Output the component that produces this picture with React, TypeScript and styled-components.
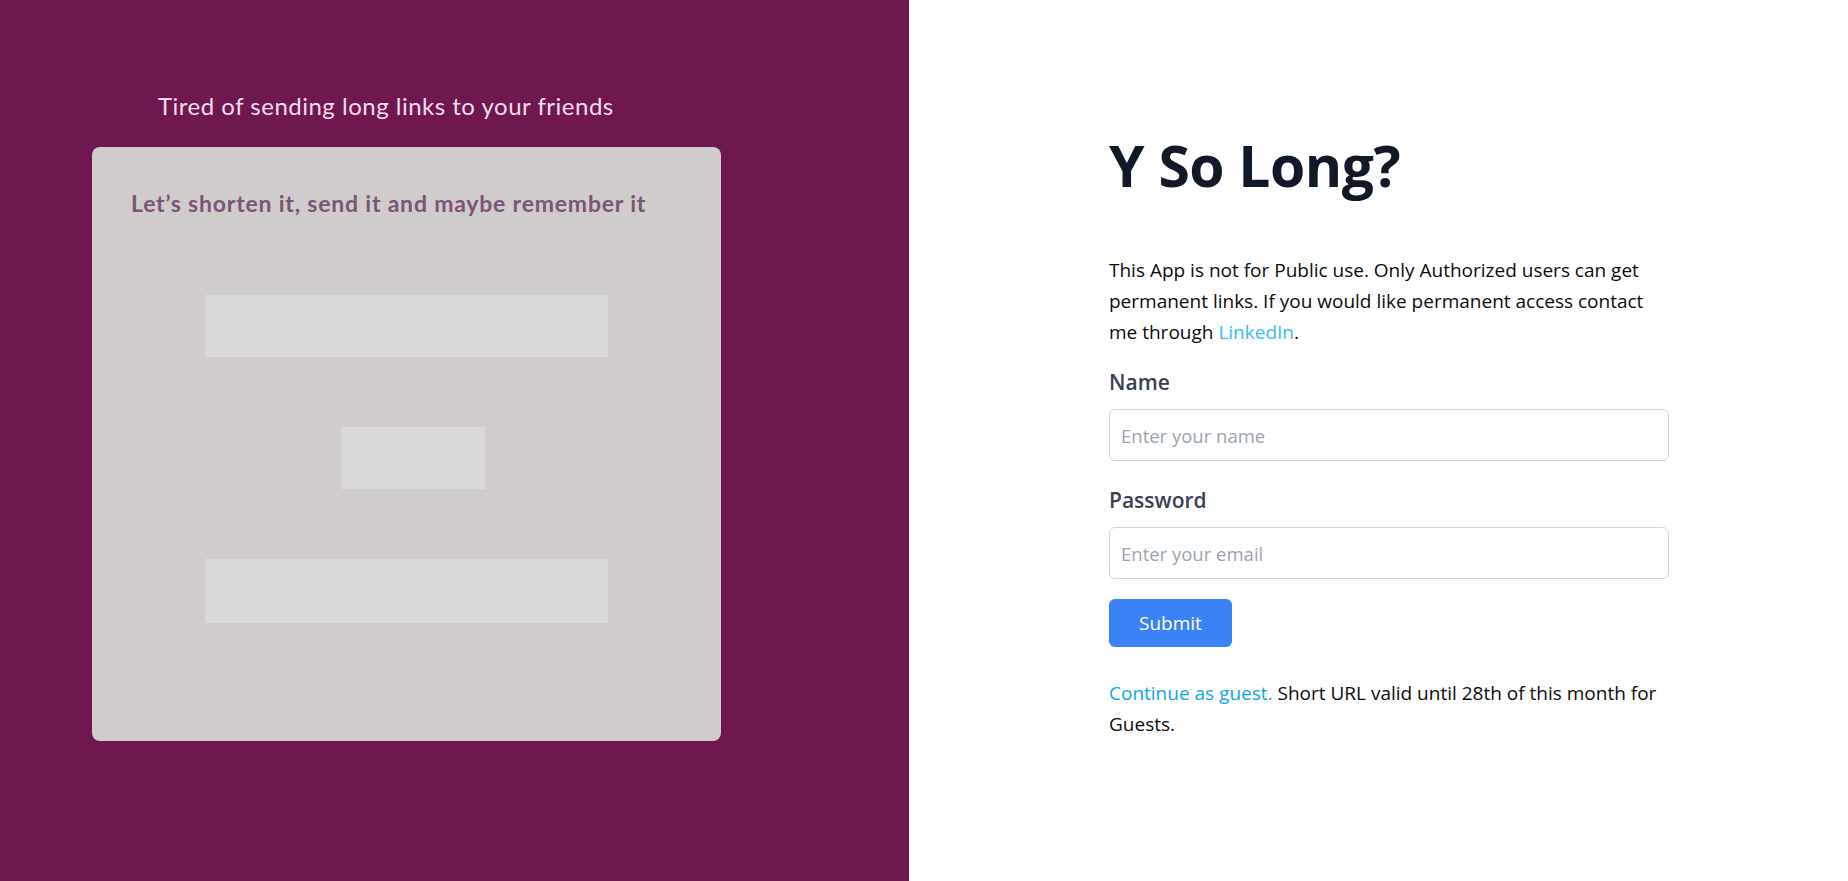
import React from "react";
import styled, { createGlobalStyle } from "styled-components";

const GlobalStyle = createGlobalStyle`
  * { box-sizing: border-box; }
  html, body { margin: 0; padding: 0; }
  body {
    font-family: "Open Sans", "Noto Sans", sans-serif;
    background: #ffffff;
  }
`;

const Page = styled.div`
  display: flex;
  width: 100%;
  height: 881px;
  overflow: hidden;
`;

const LeftPanel = styled.section`
  width: 909px;
  flex-shrink: 0;
  background: #6f1850;
  display: flex;
  flex-direction: column;
  padding: 91px 0 0 92px;
  font-family: "Lato", "Noto Sans", sans-serif;
`;

const Tagline = styled.h2`
  margin: 0 0 26px 66px;
  font-size: 24px;
  line-height: 30px;
  font-weight: 400;
  letter-spacing: 0.5px;
  color: #f3dcec;
`;

const Card = styled.div`
  width: 629px;
  height: 594px;
  background: #d0cccb;
  border-radius: 8px;
  display: flex;
  flex-direction: column;
  padding-top: 41px;
`;

const CardText = styled.p`
  margin: 0 0 77px 39px;
  font-size: 23px;
  line-height: 30px;
  font-weight: 700;
  letter-spacing: 0.8px;
  color: #7b5578;
`;

const Blocks = styled.div`
  display: flex;
  flex-direction: column;
  align-items: center;
  gap: 70px;
`;

const Block = styled.div<{ $w: number; $h: number; $shift?: number }>`
  width: ${(p) => p.$w}px;
  height: ${(p) => p.$h}px;
  margin-left: ${(p) => (p.$shift ?? 0) * 2}px;
  background: #d9d9d9;
`;

const RightPanel = styled.section`
  flex: 1;
  padding: 137px 0 0 200px;
`;

const Content = styled.div`
  width: 560px;
  display: flex;
  flex-direction: column;
  align-items: flex-start;
`;

const Title = styled.h1`
  margin: 0 0 62px;
  font-size: 57px;
  line-height: 56px;
  font-weight: 700;
  color: #111827;
  letter-spacing: -0.5px;
`;

const Text = styled.p<{ $mt?: number }>`
  margin: ${(p) => p.$mt ?? 0}px 0 0;
  font-size: 19px;
  line-height: 31px;
  color: #0b0b0b;
`;

const Link = styled.a<{ $c: string }>`
  color: ${(p) => p.$c};
  text-decoration: none;
`;

const Form = styled.form`
  display: flex;
  flex-direction: column;
  align-items: stretch;
  width: 100%;
  margin-top: 20px;
`;

const Label = styled.label<{ $mt?: number }>`
  margin: ${(p) => p.$mt ?? 0}px 0 13px;
  font-size: 21px;
  line-height: 28px;
  font-weight: 600;
  color: #374151;
`;

const Input = styled.input`
  height: 52px;
  width: 100%;
  border: 1px solid #d1d5db;
  border-radius: 6px;
  padding: 0 11px;
  font-family: "Open Sans", "Noto Sans", sans-serif;
  font-size: 18.5px;
  color: #111827;
  background: #fff;
  outline: none;
  &::placeholder {
    color: #9ca3af;
  }
`;

const Button = styled.button`
  align-self: flex-start;
  margin-top: 20px;
  height: 48px;
  padding: 0 30px;
  border: none;
  border-radius: 6px;
  background: #3b82f6;
  color: #ffffff;
  font-family: "Open Sans", "Noto Sans", sans-serif;
  font-size: 19px;
  cursor: pointer;
`;

export default function App() {
  return (
    <>
      <GlobalStyle />
      <Page>
        <LeftPanel>
          <Tagline>Tired of sending long links to your friends</Tagline>
          <Card>
            <CardText>Let’s shorten it, send it and maybe remember it</CardText>
            <Blocks>
              <Block $w={403} $h={62} />
              <Block $w={144} $h={62} $shift={6} />
              <Block $w={403} $h={64} />
            </Blocks>
          </Card>
        </LeftPanel>
        <RightPanel>
          <Content>
            <Title>Y So Long?</Title>
            <Text>
              This App is not for Public use. Only Authorized users can get
              permanent links. If you would like permanent access contact me
              through <Link href="#" $c="#38bdf8">LinkedIn</Link>.
            </Text>
            <Form onSubmit={(e) => e.preventDefault()}>
              <Label htmlFor="name">Name</Label>
              <Input id="name" type="text" placeholder="Enter your name" />
              <Label htmlFor="password" $mt={25}>Password</Label>
              <Input id="password" type="password" placeholder="Enter your email" />
              <Button type="submit">Submit</Button>
            </Form>
            <Text $mt={31}>
              <Link href="#" $c="#0ea5e9">Continue as guest.</Link> Short URL valid
              until 28th of this month for Guests.
            </Text>
          </Content>
        </RightPanel>
      </Page>
    </>
  );
}
